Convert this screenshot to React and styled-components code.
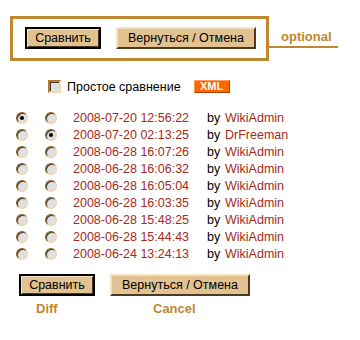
import React from 'react';
import styled, { createGlobalStyle } from 'styled-components';

const gold = '#c0882f';
const red = '#a52a1a';

const GlobalStyle = createGlobalStyle`
  body {
    margin: 0;
    background: #fff;
    font-family: "Liberation Sans", Arial, sans-serif;
    font-size: 12.5px;
    color: #000;
  }
`;

const Page = styled.div`
  width: 360px;
  height: 340px;
  padding-top: 16px;
  box-sizing: border-box;
`;

const TopRow = styled.div`
  display: flex;
  align-items: flex-start;
  margin-left: 10px;
`;

const Frame = styled.div`
  display: flex;
  gap: 15px;
  width: 259px;
  height: 45px;
  box-sizing: border-box;
  border: 3px solid ${gold};
  padding: 8px 0 0 12px;
`;

const Optional = styled.div`
  margin-top: 13px;
  padding: 0 6px 1px 12px;
  line-height: 16px;
  border-bottom: 2px solid ${gold};
  color: ${gold};
  font-weight: bold;
  font-size: 13px;
`;

const Button = styled.button`
  height: 22px;
  width: ${(p) => p.w}px;
  padding: 0;
  box-sizing: border-box;
  background: #e2c290;
  font-family: "Liberation Sans", Arial, sans-serif;
  font-size: 12.5px;
  color: #000;
  border: 2px solid;
  border-color: #f4e2c2 #4a3a22 #4a3a22 #f4e2c2;
  ${(p) =>
    p.primary &&
    `border-color: #000; box-shadow: inset 1px 1px 0 #f4e2c2, inset -1px -1px 0 #4a3a22;`}
`;

const OptionsRow = styled.div`
  display: flex;
  align-items: center;
  margin: 19px 0 0 48px;
  height: 13px;
`;

const Checkbox = styled.span`
  width: 13px;
  height: 13px;
  box-sizing: border-box;
  background: #e0e0e0;
  border: 2px solid;
  border-color: #b87a1e #f0d8b0 #f0d8b0 #b87a1e;
  box-shadow: inset 1px 1px 0 #404040;
`;

const CheckLabel = styled.span`
  margin-left: 6px;
`;

const XmlBadge = styled.span`
  margin-left: 13px;
  width: 36px;
  height: 13px;
  box-sizing: border-box;
  background: #f60;
  color: #fff;
  font-weight: bold;
  font-size: 11px;
  line-height: 11px;
  text-align: center;
  border: 1px solid;
  border-color: #ff9a5a #a84000 #a84000 #ff9a5a;
`;

const History = styled.div`
  margin: 16px 0 0 16px;
`;

const Row = styled.div`
  display: grid;
  grid-template-columns: 29px 28px 134px 18px auto;
  align-items: center;
  height: 17px;
`;

const Radio = styled.span`
  position: relative;
  width: 12px;
  height: 12px;
  box-sizing: border-box;
  border-radius: 50%;
  background: #e0e0e0;
  border: 1px solid;
  border-color: #8a5a10 #f0d2a0 #f0d2a0 #8a5a10;
  box-shadow: inset 1px 1px 0 #404040;
  &::after {
    content: '';
    display: ${(p) => (p.checked ? 'block' : 'none')};
    position: absolute;
    left: 3px;
    top: 3px;
    width: 4px;
    height: 4px;
    border-radius: 50%;
    background: #000;
  }
`;

const DateLink = styled.span`
  color: ${red};
`;

const User = styled.span`
  color: ${red};
`;

const BottomButtons = styled.div`
  display: flex;
  gap: 15px;
  margin: 12px 0 0 19px;
`;

const Captions = styled.div`
  display: flex;
  margin: 5px 0 0 36px;
  color: ${gold};
  font-weight: bold;
  font-size: 13px;
`;

const Caption = styled.span`
  width: ${(p) => p.w}px;
`;

const revisions = [
  ['2008-07-20 12:56:22', 'WikiAdmin'],
  ['2008-07-20 02:13:25', 'DrFreeman'],
  ['2008-06-28 16:07:26', 'WikiAdmin'],
  ['2008-06-28 16:06:32', 'WikiAdmin'],
  ['2008-06-28 16:05:04', 'WikiAdmin'],
  ['2008-06-28 16:03:35', 'WikiAdmin'],
  ['2008-06-28 15:48:25', 'WikiAdmin'],
  ['2008-06-28 15:44:43', 'WikiAdmin'],
  ['2008-06-24 13:24:13', 'WikiAdmin'],
];

const App = () => (
  <Page>
    <GlobalStyle />
    <TopRow>
      <Frame>
        <Button primary w={76}>Сравнить</Button>
        <Button w={140}>Вернуться / Отмена</Button>
      </Frame>
      <Optional>optional</Optional>
    </TopRow>
    <OptionsRow>
      <Checkbox />
      <CheckLabel>Простое сравнение</CheckLabel>
      <XmlBadge>XML</XmlBadge>
    </OptionsRow>
    <History>
      {revisions.map(([date, user], i) => (
        <Row key={date}>
          <Radio checked={i === 0} />
          <Radio checked={i === 1} />
          <DateLink>{date}</DateLink>
          <span>by</span>
          <User>{user}</User>
        </Row>
      ))}
    </History>
    <BottomButtons>
      <Button primary w={76}>Сравнить</Button>
      <Button w={140}>Вернуться / Отмена</Button>
    </BottomButtons>
    <Captions>
      <Caption w={117}>Diff</Caption>
      <Caption>Cancel</Caption>
    </Captions>
  </Page>
);

export default App;
